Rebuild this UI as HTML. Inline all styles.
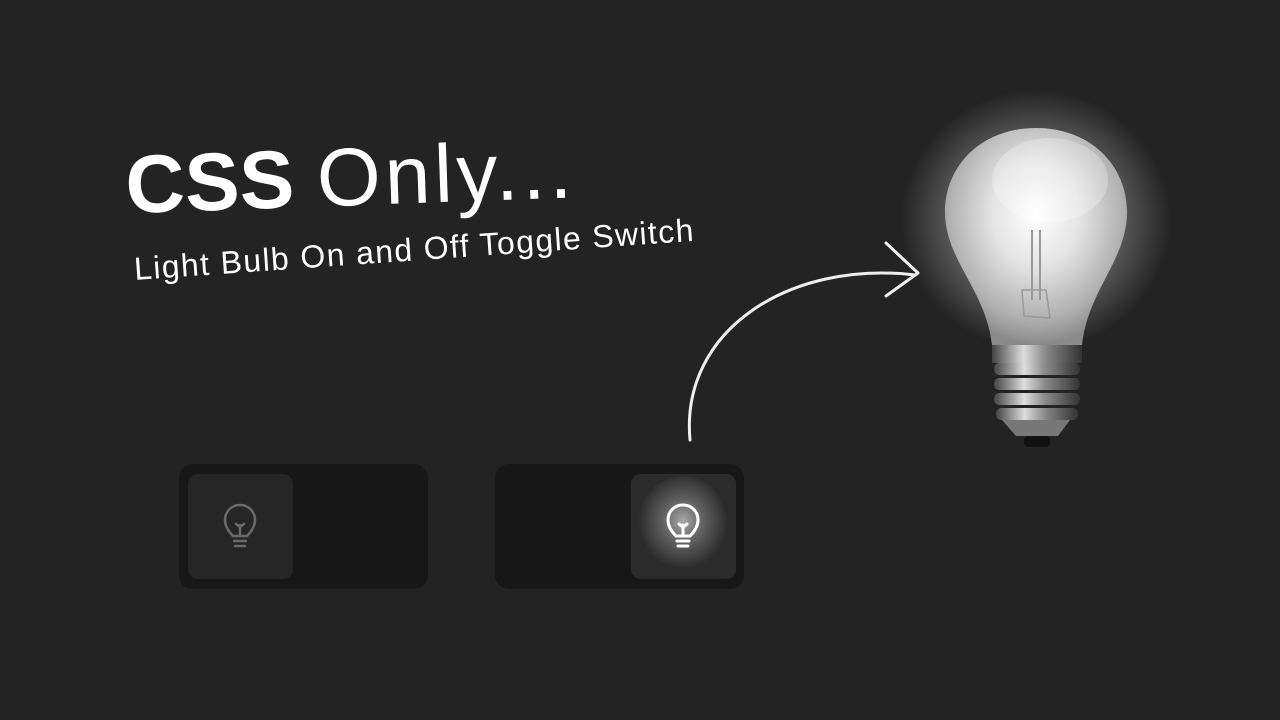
<!DOCTYPE html>
<html><head><style>
body{margin:0;width:1280px;height:720px;background:#232323;overflow:hidden;position:relative;font-family:"Liberation Sans",sans-serif;color:#fff}
.t{position:absolute;left:127px;top:146px;font-size:82px;line-height:80px;transform:rotate(-2deg);transform-origin:left bottom;white-space:nowrap}
.t b{font-weight:900;letter-spacing:0px}
.t span{font-weight:300;letter-spacing:4px}
.s{position:absolute;left:133px;top:253px;font-size:32px;line-height:32px;letter-spacing:1.4px;transform:rotate(-4deg);transform-origin:left top;white-space:nowrap;font-weight:300}
.tg{position:absolute;top:464px;width:249px;height:125px;background:#181818;border-radius:14px}
.k{position:absolute;top:10px;width:105px;height:105px;background:#262626;border-radius:10px}
</style></head><body>
<div class="t"><b>CSS</b> <span>Only...</span></div>
<div class="s">Light Bulb On and Off Toggle Switch</div>
<svg style="position:absolute;left:0;top:0" width="1280" height="720">
<path d="M690 440 C680 330 790 260 915 275" fill="none" stroke="#eee" stroke-width="3" stroke-linecap="round"/>
<path d="M886 243 L918 273 L886 296" fill="none" stroke="#eee" stroke-width="3" stroke-linecap="round" stroke-linejoin="round"/>
<defs>
<radialGradient id="glow"><stop offset="0.55" stop-color="#fff" stop-opacity=".3"/><stop offset="1" stop-color="#fff" stop-opacity="0"/></radialGradient>
<radialGradient id="g" cx=".5" cy=".4" r=".6"><stop offset="0" stop-color="#fff"/><stop offset=".4" stop-color="#e4e4e4"/><stop offset=".8" stop-color="#b0b0b0"/><stop offset="1" stop-color="#8a8a8a"/></radialGradient>
<linearGradient id="m" x1="0" x2="1"><stop offset="0" stop-color="#444"/><stop offset=".35" stop-color="#ddd"/><stop offset=".6" stop-color="#888"/><stop offset="1" stop-color="#333"/></linearGradient>
<radialGradient id="kg" cx=".5" cy=".47" r=".5"><stop offset="0" stop-color="#a8a8a8"/><stop offset=".45" stop-color="#606060"/><stop offset="1" stop-color="#2b2b2b"/></radialGradient>
</defs>
<ellipse cx="1036" cy="220" rx="135" ry="130" fill="url(#glow)"/>
<path d="M1036 128 C1090 128 1127 165 1127 212 C1127 260 1088 290 1082 345 L992 345 C986 290 945 260 945 212 C945 165 982 128 1036 128Z" fill="url(#g)"/>
<ellipse cx="1050" cy="180" rx="58" ry="42" fill="#fff" opacity=".25"/>
<path d="M1032 230 L1032 300 M1040 230 L1040 300" stroke="#999" stroke-width="2"/>
<path d="M1022 290 L1046 290 L1050 318 L1024 316Z" fill="none" stroke="#999" stroke-width="1.5"/>
<rect x="992" y="345" width="90" height="18" fill="url(#m)"/>
<g fill="url(#m)"><rect x="994" y="363" width="86" height="12" rx="5"/><rect x="994" y="378" width="86" height="12" rx="5"/><rect x="994" y="393" width="86" height="12" rx="5"/><rect x="996" y="408" width="82" height="12" rx="5"/></g>
<path d="M1002 420 L1070 420 L1058 436 L1016 436Z" fill="#777"/>
<rect x="1024" y="436" width="26" height="11" rx="4" fill="#111"/>
</svg>
<div class="tg" style="left:179px"><div class="k" style="left:9px"></div></div>
<div class="tg" style="left:495px"><div class="k" style="left:136px;overflow:hidden"><svg width="105" height="105"><rect width="105" height="105" fill="#2b2b2b"/><ellipse cx="52" cy="50" rx="45" ry="48" fill="url(#kg)"/></svg></div></div>
<svg style="position:absolute;left:219px;top:500px" width="45" height="55" viewBox="0 0 45 55"><path d="M14 36 C8 30 6 25 6 20 C6 11 13 5 21 5 C29 5 36 11 36 20 C36 25 34 30 28 36 L14 36Z M21 36 V25 M17 24 L21 27 L25 24 M15 41 H27 M16 46 H26" fill="none" stroke="#6a6a6a" stroke-width="2.5" stroke-linecap="round"/></svg>
<svg style="position:absolute;left:662px;top:500px" width="45" height="55" viewBox="0 0 45 55"><path d="M14 36 C8 30 6 25 6 20 C6 11 13 5 21 5 C29 5 36 11 36 20 C36 25 34 30 28 36 L14 36Z M21 36 V25 M17 24 L21 27 L25 24 M15 41 H27 M16 46 H26" fill="none" stroke="#fff" stroke-width="3" stroke-linecap="round"/></svg>
</body></html>
